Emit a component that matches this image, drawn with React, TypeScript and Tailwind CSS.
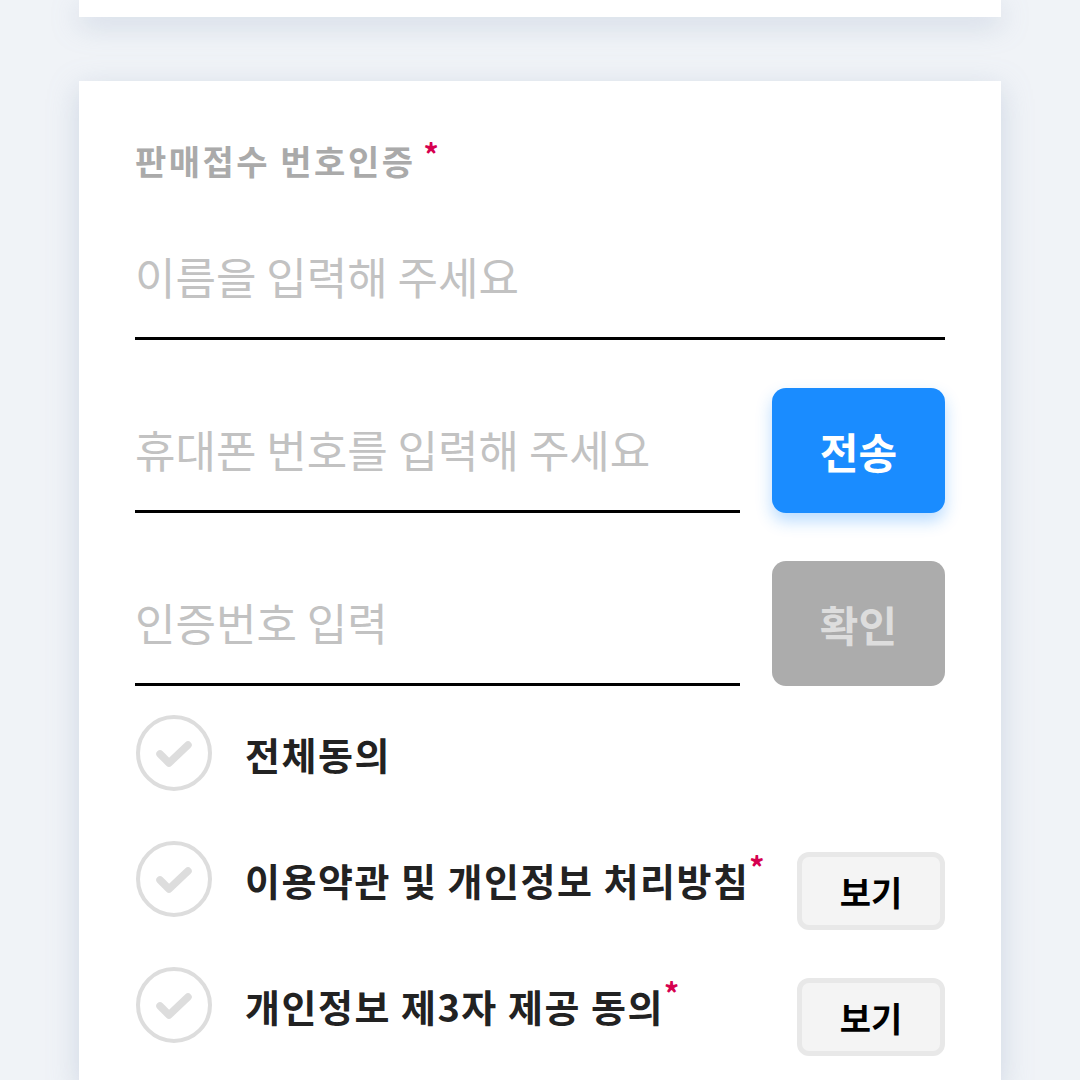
import React, { useState } from 'react';

const FONT = '"Noto Sans CJK KR", "Noto Sans", sans-serif';

const CheckCircle: React.FC<{ checked: boolean }> = ({ checked }) => (
  <svg width="78" height="78" viewBox="0 0 78 78" className="shrink-0">
    <circle cx="39" cy="39" r="36" fill="none" stroke={checked ? '#1a8cff' : '#dddddd'} strokeWidth="4" />
    <path
      d="M25 40 L34 49 L53 31"
      fill="none"
      stroke={checked ? '#1a8cff' : '#dddddd'}
      strokeWidth="7.5"
      strokeLinecap="round"
      strokeLinejoin="round"
    />
  </svg>
);

const Required = () => <span className="text-[#d6004f] text-[30px] font-bold leading-none align-top">*</span>;

export default function App() {
  const [agree, setAgree] = useState({ all: false, terms: false, third: false });

  return (
    <div className="min-h-screen w-[1080px] bg-[#f0f3f7] px-[79px] overflow-hidden" style={{ fontFamily: FONT }}>
      {/* card above (cut off) */}
      <div className="h-[17px] bg-white shadow-[0_8px_28px_rgba(140,160,190,0.35)]" />

      {/* 번호인증 card */}
      <div className="mt-[64px] bg-white px-[56px] pt-[58px] pb-[40px] shadow-[0_8px_28px_rgba(140,160,190,0.35)]">
        <div className="flex items-start text-[34px] font-bold leading-[44px] tracking-[2.5px] text-[#aaaaaa]">
          판매접수 번호인증
          <span className="ml-[8px] -mt-[8px] text-[#d6004f] text-[30px]">*</span>
        </div>

        <div className="mt-[32px] h-[125px] border-b-[3px] border-black flex items-center">
          <input
            className="w-full bg-transparent text-[44px] text-[#222] outline-none placeholder:text-[#c2c2c2]"
            placeholder="이름을 입력해 주세요"
          />
        </div>

        <div className="mt-[48px] flex items-end gap-[32px]">
          <div className="flex-1 h-[125px] border-b-[3px] border-black flex items-center">
            <input
              className="w-full bg-transparent text-[44px] text-[#222] outline-none placeholder:text-[#c2c2c2]"
              placeholder="휴대폰 번호를 입력해 주세요"
            />
          </div>
          <button className="w-[173px] h-[125px] rounded-[14px] bg-[#1a8cff] text-white text-[42px] font-bold shadow-[0_8px_16px_rgba(26,140,255,0.3)]">
            전송
          </button>
        </div>

        <div className="mt-[48px] flex items-end gap-[32px]">
          <div className="flex-1 h-[125px] border-b-[3px] border-black flex items-center">
            <input
              className="w-full bg-transparent text-[44px] text-[#222] outline-none placeholder:text-[#c2c2c2]"
              placeholder="인증번호 입력"
            />
          </div>
          <button className="w-[173px] h-[125px] rounded-[14px] bg-[#acacac] text-[#dddddd] text-[42px] font-bold" disabled>
            확인
          </button>
        </div>

        {/* 약관 동의 */}
        <div className="mt-[28px] flex flex-col gap-[48px]">
          <div className="flex items-center cursor-pointer" onClick={() => setAgree({ all: !agree.all, terms: !agree.all, third: !agree.all })}>
            <CheckCircle checked={agree.all} />
            <span className="ml-[32px] text-[38px] font-bold tracking-[1.5px] text-[#222]">전체동의</span>
          </div>

          <div className="flex items-start">
            <div className="flex items-center flex-1 cursor-pointer" onClick={() => setAgree({ ...agree, terms: !agree.terms })}>
              <CheckCircle checked={agree.terms} />
              <span className="ml-[32px] text-[38px] font-bold tracking-[1.5px] text-[#222] whitespace-nowrap">
                이용약관 및 개인정보 처리방침
                <Required />
              </span>
            </div>
            <button className="mt-[12px] -mb-[12px] w-[148px] h-[78px] rounded-[12px] border-[5px] border-[#e8e8e8] bg-[#f4f4f4] text-[34px] font-bold text-black">
              보기
            </button>
          </div>

          <div className="flex items-start">
            <div className="flex items-center flex-1 cursor-pointer" onClick={() => setAgree({ ...agree, third: !agree.third })}>
              <CheckCircle checked={agree.third} />
              <span className="ml-[32px] text-[38px] font-bold tracking-[1.5px] text-[#222] whitespace-nowrap">
                개인정보 제3자 제공 동의
                <Required />
              </span>
            </div>
            <button className="mt-[12px] -mb-[12px] w-[148px] h-[78px] rounded-[12px] border-[5px] border-[#e8e8e8] bg-[#f4f4f4] text-[34px] font-bold text-black">
              보기
            </button>
          </div>
        </div>
      </div>
    </div>
  );
}
